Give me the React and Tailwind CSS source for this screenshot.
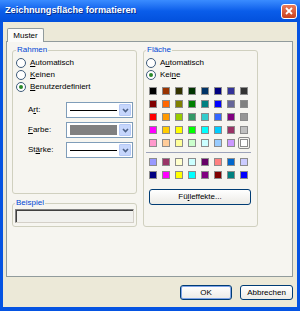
import React from "react";

const palette = [
  ["#000000", "#993300", "#333300", "#003300", "#003366", "#000080", "#333399", "#333333"],
  ["#800000", "#FF6600", "#808000", "#008000", "#008080", "#0000FF", "#666699", "#808080"],
  ["#FF0000", "#FF9900", "#99CC00", "#339966", "#33CCCC", "#3366FF", "#800080", "#969696"],
  ["#FF00FF", "#FFCC00", "#FFFF00", "#00FF00", "#00FFFF", "#00CCFF", "#993366", "#C0C0C0"],
  ["#FF99CC", "#FFCC99", "#FFFF99", "#CCFFCC", "#CCFFFF", "#99CCFF", "#CC99FF", "#FFFFFF"],
];
const palette2 = [
  ["#9999FF", "#993366", "#FFFFCC", "#CCFFFF", "#660066", "#FF8080", "#0066CC", "#CCCCFF"],
  ["#000080", "#FF00FF", "#FFFF00", "#00FFFF", "#800080", "#800000", "#008080", "#0000FF"],
];

function U({ children }) {
  return <span className="underline underline-offset-[1px]">{children}</span>;
}

function Radio({ checked, children }) {
  return (
    <div className="flex items-center gap-[4px] h-[12px]">
      <span className="w-[10px] h-[10px] rounded-full border border-[#3E5B7A] bg-white flex items-center justify-center">
        {checked && <span className="w-[4px] h-[4px] rounded-full bg-[#2A8A2A]" />}
      </span>
      <span className="leading-[10px]">{children}</span>
    </div>
  );
}

function Drop({ children }) {
  return (
    <div className="w-[67px] h-[16px] border border-[#7F9DB9] bg-white flex p-[1px]">
      <div className="flex-1 flex items-center px-[2px]">{children}</div>
      <div className="w-[12px] bg-[#C6D6FC] border border-[#B4C8F6] rounded-[1px] flex items-center justify-center">
        <svg width="7" height="5" viewBox="0 0 7 5">
          <path d="M1 1 L3.5 3.5 L6 1" fill="none" stroke="#4D6185" strokeWidth="1.6" />
        </svg>
      </div>
    </div>
  );
}

function Swatch({ c, selected }) {
  return (
    <div className="relative w-[8px] h-[8px]">
      {selected && (
        <div className="absolute -left-[2px] -top-[2px] w-[12px] h-[12px] rounded-[2px] border border-[#8A8A8A]" />
      )}
      <div className="w-[8px] h-[8px] border border-[#8C8C8C]" style={{ backgroundColor: c }} />
    </div>
  );
}

function Grid({ rows, sel }) {
  return (
    <div className="flex flex-col gap-y-[5px]">
      {rows.map((r, i) => (
        <div key={i} className="flex gap-x-[5px]">
          {r.map((c, j) => (
            <Swatch key={j} c={c} selected={sel && i === rows.length - 1 && j === 7} />
          ))}
        </div>
      ))}
    </div>
  );
}

export default function App() {
  return (
    <div className="w-[300px] h-[311px] flex flex-col bg-[#0553E2] font-['Liberation_Sans',Arial,sans-serif] text-[8px] text-black overflow-hidden">
      {/* title bar */}
      <div className="h-[22px] flex items-center justify-between pl-[5px] pr-[3px] bg-gradient-to-b from-[#3A8CFF] via-[#0A5DEA] to-[#0350DC]">
        <span className="text-white font-bold text-[9.2px] leading-none [text-shadow:1px_1px_0_#0B2F8A]">
          Zeichnungsfläche formatieren
        </span>
        <div className="w-[16px] h-[15px] rounded-[3px] border border-white bg-gradient-to-b from-[#E97A5A] to-[#C8401C] flex items-center justify-center">
          <svg width="8" height="8" viewBox="0 0 8 8">
            <path d="M1 1 L7 7 M7 1 L1 7" stroke="white" strokeWidth="1.8" />
          </svg>
        </div>
      </div>

      {/* body */}
      <div className="flex-1 mx-[3px] mb-[4px] bg-[#ECE9D8] flex flex-col pt-[6px] pl-[3px] pr-[4px]">
        {/* tabs */}
        <div className="flex pl-[1px] h-[14px] relative z-10">
          <div className="w-[37px] h-[14px] bg-[#FBFBF9] border border-b-0 border-[#919B9C] rounded-t-[2px] flex items-center justify-center">
            Muster
          </div>
        </div>
        {/* panel */}
        <div className="h-[236px] -mt-[1px] border border-[#919B9C] bg-[#F6F5F0] flex pt-[3px] pl-[5px] gap-[6px]">
          {/* left column */}
          <div className="w-[125px] flex flex-col gap-[4px]">
            <fieldset className="h-[149px] border border-[#D0D0BF] rounded-[3px] px-[3px]">
              <legend className="ml-[0px] px-[1px] text-[#0046D5] leading-[10px]">Rahmen</legend>
              <div className="pt-[2px] flex flex-col">
                <Radio><U>A</U>utomatisch</Radio>
                <Radio><U>K</U>einen</Radio>
                <Radio checked><U>B</U>enutzerdefiniert</Radio>
              </div>
              <div className="mt-[9px] flex flex-col gap-[4px] pl-[12px]">
                <div className="flex items-center justify-between">
                  <span>A<U>r</U>t:</span>
                  <Drop>
                    <div className="w-full h-px bg-black" />
                  </Drop>
                </div>
                <div className="flex items-center justify-between">
                  <span><U>F</U>arbe:</span>
                  <Drop>
                    <div className="w-full h-[10px] bg-[#808080]" />
                  </Drop>
                </div>
                <div className="flex items-center justify-between">
                  <span>St<U>ä</U>rke:</span>
                  <Drop>
                    <div className="w-full h-px bg-black" />
                  </Drop>
                </div>
              </div>
            </fieldset>
            <fieldset className="h-[29px] border border-[#D0D0BF] rounded-[3px] px-[2px]">
              <legend className="px-[1px] text-[#0046D5] leading-[10px]">Beispiel</legend>
              <div className="mt-[1px] h-[14px] border border-[#808080] border-r-[#D4D0C8] border-b-[#D4D0C8] bg-[#F1F1EE] shadow-[inset_1px_1px_0_#404040]" />
            </fieldset>
          </div>

          {/* Fläche */}
          <fieldset className="w-[115px] h-[182px] border border-[#D0D0BF] rounded-[3px] px-[2px]">
            <legend className="px-[1px] text-[#0046D5] leading-[10px]">Fläche</legend>
            <div className="pt-[2px] flex flex-col">
              <Radio>A<U>u</U>tomatisch</Radio>
              <Radio checked>Kei<U>n</U>e</Radio>
            </div>
            <div className="mt-[6px] pl-[3px]">
              <Grid rows={palette} sel />
            </div>
            <div className="mt-[5px] h-px bg-[#9DA3BA] mr-[4px]" />
            <div className="mt-[5px] pl-[3px]">
              <Grid rows={palette2} />
            </div>
            <div className="mt-[10px] ml-[3px] w-[102px] h-[16px] rounded-[3px] border border-[#003C74] bg-gradient-to-b from-white to-[#ECEBE6] flex items-center justify-center">
              Fü<U>l</U>leffekte...
            </div>
          </fieldset>
        </div>

        {/* buttons */}
        <div className="mt-[8px] flex justify-end gap-[8px]">
          <div className="w-[52px] h-[15px] rounded-[3px] border border-[#003C74] bg-gradient-to-b from-white to-[#ECEBE6] shadow-[inset_0_0_0_1px_#7FA4E8] flex items-center justify-center">
            OK
          </div>
          <div className="w-[53px] h-[15px] rounded-[3px] border border-[#003C74] bg-gradient-to-b from-white to-[#ECEBE6] flex items-center justify-center">
            Abbrechen
          </div>
        </div>
      </div>
    </div>
  );
}
